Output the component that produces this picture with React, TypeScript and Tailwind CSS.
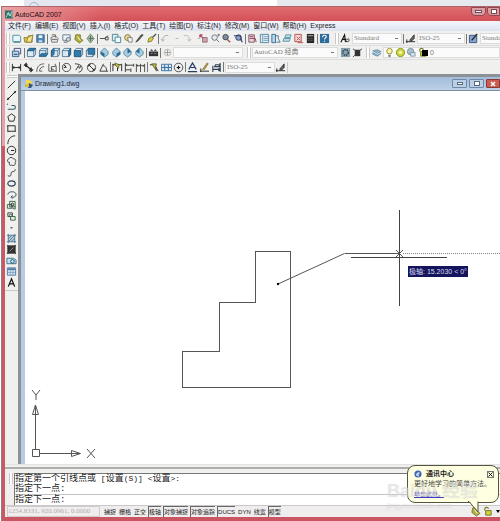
import React from 'react';

const ICONS: Record<string, React.ReactNode> = {
  new: (
    <>
      <path d="M2 2.500h7l1.500 1.500v5.500H2z" fill="#e6f6fa" stroke="#4e8f9e" />
      <path d="M3 10h7" stroke="#2b6d80" />
    </>
  ),
  open: (
    <>
      <path d="M1 5h4l1-2h4v7H2z" fill="#e5c34b" stroke="#7a6a20" strokeWidth=".8" />
      <path d="M5 5l6-3-2 8H4z" fill="#f7e48a" stroke="#6d6727" strokeWidth=".7" />
    </>
  ),
  save: (
    <>
      <rect x="2" y="2" width="8" height="8" fill="#4c86b4" stroke="#2d5f8c" />
      <path d="M4 2.500h4v3H4z" fill="#eef6fb" />
      <path d="M4 8h4v2H4z" fill="#cfe3f0" />
    </>
  ),
  plot: (
    <>
      <path d="M2 5l5-2 3 3-1 4H3z" fill="#e6e6e6" stroke="#555" strokeWidth=".8" />
      <path d="M3 2h4v3M3 7h6" stroke="#666" />
    </>
  ),
  preview: (
    <>
      <path d="M2 2h8v6H2z" fill="#edf4f8" stroke="#5a7d92" />
      <circle cx="8" cy="7" r="2.200" fill="#c8dde8" stroke="#555" strokeWidth=".8" />
      <path d="M3 10h4" stroke="#555" />
    </>
  ),
  publish: (
    <>
      <path d="M3 2h5v4l3 2-4 3-5-4z" fill="#b6b23a" stroke="#5f6420" strokeWidth=".8" />
      <path d="M5 4l3 4" stroke="#fff" />
    </>
  ),
  globe: (
    <>
      <path d="M6 1l4 5-4 5-4-5z" fill="#a9bb9c" stroke="#5f7d6a" strokeWidth=".8" />
      <path d="M4 6h5M6 3v6" stroke="#4d6b6c" />
    </>
  ),
  cut: <path d="M1 6h6M7 4.500h3v3H7zM6 6l4-3" stroke="#4a4a4a" />,
  copy: (
    <>
      <path d="M1.500 1.500h6v7h-6z" fill="#ddf0f5" stroke="#4b8494" />
      <path d="M4.500 4.500h6v6h-6z" fill="#f3fafc" stroke="#4b8494" />
    </>
  ),
  paste: (
    <>
      <circle cx="5" cy="5" r="3.200" fill="#ecd98c" stroke="#77713f" />
      <path d="M5 5h5v5H6z" fill="#f5f5f5" stroke="#666" strokeWidth=".8" />
    </>
  ),
  match: <path d="M2 10l3-2 5-6-2 0-4 5z" fill="#5d5a4d" stroke="#333" strokeWidth=".8" />,
  brush: (
    <>
      <path d="M2 10l1-4 3-2 2 2-2 3z" fill="#dccb3f" stroke="#6c6622" strokeWidth=".8" />
      <path d="M7 5l4-4" stroke="#555" strokeWidth="1.500" />
    </>
  ),
  undo: <path d="M9 3C5 2 3 4 3 8M1 6.500L3 9l2-2" stroke="#aaa" />,
  redo: <path d="M2 3c5-1 6 1 6 5M6 7l2 2 2-2.500" stroke="#b5b5b5" />,
  dash: <path d="M5 6h3" stroke="#b5b5b5" />,
  pan: (
    <>
      <path d="M2 2l4 4M2 2h3M2 2v3" stroke="#b44660" strokeWidth="1.300" />
      <path d="M5 5h5v5H5z" fill="#d3a5a9" stroke="#815361" strokeWidth=".8" />
    </>
  ),
  zoom: (
    <>
      <circle cx="5" cy="5" r="3" fill="#e5ebf1" stroke="#6f747d" />
      <path d="M7 7l3 3M8 2h3M9.500 1v3" stroke="#6f747d" />
    </>
  ),
  zoomWin: (
    <>
      <circle cx="5" cy="4.500" r="3" fill="#7d8c9e" stroke="#3d4956" />
      <path d="M7 7l3 3" stroke="#a04c50" strokeWidth="1.500" />
    </>
  ),
  zoomPrev: (
    <>
      <circle cx="6" cy="5" r="3" fill="#8fa1c8" stroke="#2d3a66" />
      <path d="M1 3h7l2 7M8 7l2 3" stroke="#2d3a66" />
    </>
  ),
  props: (
    <>
      <path d="M2 2h6v8H2z" fill="#e6d6dc" stroke="#804e60" />
      <path d="M3 4h4M3 6h6l1 4" stroke="#9b3b55" />
    </>
  ),
  palette: (
    <>
      <path d="M1.500 1.500h9v9h-9z" fill="#e4f0f8" stroke="#4f83a5" />
      <path d="M4 2v8M5 4h5M5 6h5M5 8h5" stroke="#5a86a5" strokeWidth=".8" />
    </>
  ),
  tools: (
    <>
      <path d="M2 1.500h4v9H2z" fill="#b8d7ea" stroke="#356c91" />
      <path d="M6 3h3v3l2 4H7" stroke="#4a7794" />
    </>
  ),
  sheets: <path d="M4 2h6l-1 3H3zM2 6h7l-1 3H1z" fill="#bfe0ea" stroke="#3e7f93" strokeWidth=".8" />,
  markup: (
    <>
      <path d="M2 1.500h7v8H2z" fill="#f6dede" stroke="#b34b4b" />
      <path d="M4 4l4 4M8 4L4 8M5 10.500h6" stroke="#c04747" />
    </>
  ),
  calc: (
    <>
      <path d="M2 1h8v10H2z" fill="#2a2a2a" />
      <path d="M3 3h6" stroke="#b5c4b5" />
      <path d="M3 6h6M3 8h6" stroke="#777" strokeDasharray="1 1" />
    </>
  ),
  help: (
    <>
      <rect x="1" y="1" width="10" height="10" fill="#2d6d9c" />
      <path d="M4 4.500c0-3 4-2.500 4-.3C8 5.500 6 5.500 6 7M6 8.500v1" stroke="#fff" strokeWidth="1.200" />
    </>
  ),
  textStyle: (
    <>
      <path d="M1 10l4-8 1 8M3 7h4" stroke="#111" strokeWidth="1.200" />
      <path d="M6 9c4 2 5-2 3-3L7 8" stroke="#333" />
    </>
  ),
  dimStyle: (
    <>
      <path d="M1 9.500h10M2 7v4" stroke="#222" />
      <path d="M5 8l5-6v4l-3 3z" fill="#666" stroke="#222" strokeWidth=".8" />
    </>
  ),
  tableStyle: (
    <>
      <path d="M1.500 2.500h8v8h-8z" fill="#86a6cf" stroke="#39517d" />
      <path d="M4 8l6-7" stroke="#222" strokeWidth="1.500" />
    </>
  ),
  views: (
    <>
      <path d="M3.500 1.500h7v6h-7z" fill="#eef" stroke="#447" />
      <path d="M1.500 4.500h7v6h-7z" fill="#bcd6e8" stroke="#2c6088" />
      <path d="M3 8h4" stroke="#235" />
    </>
  ),
  camera: (
    <>
      <path d="M1 5h10v5H1z" fill="#333" />
      <path d="M2 5l2-3 2 3 2-3 2 3z" fill="#667" />
      <path d="M3 7h2M7 7h2" stroke="#8a93a0" />
    </>
  ),
  ucs: (
    <>
      <circle cx="6" cy="6" r="3.500" stroke="#b5b5b5" />
      <path d="M6 3v6M3 6h6" stroke="#999" />
    </>
  ),
  gear: (
    <>
      <rect x="1" y="1" width="10" height="10" fill="#87a0ad" />
      <circle cx="6" cy="6" r="3" stroke="#263c4a" strokeWidth="1.500" strokeDasharray="1.500 1" />
    </>
  ),
  myspace: (
    <>
      <path d="M3 3h6v7H3z" fill="#333" />
      <path d="M1 2l3 2M8 4l3-2M3 9l-2 2" stroke="#444" />
    </>
  ),
  layers: <path d="M2 4l5-1 4 2-4 2zM2 6l5 3 4-2-4 3-5-2z" fill="#8eb3cc" stroke="#5e8aa8" strokeWidth=".8" />,
  bulb: (
    <>
      <circle cx="6" cy="4.500" r="3" fill="#fbf6a0" stroke="#8d8a35" />
      <path d="M4.500 9h3M5 10.500h2" stroke="#555" />
    </>
  ),
  sun: (
    <>
      <circle cx="6" cy="6" r="4.500" fill="#c9d33d" stroke="#8a9421" />
      <circle cx="6" cy="6" r="2" fill="#f8f59c" />
    </>
  ),
  viewport: (
    <>
      <circle cx="5" cy="5" r="3.500" fill="#a9c3cf" stroke="#6f8c99" />
      <path d="M5 6h5v4H5z" fill="#d6e4ea" stroke="#6f8c99" strokeWidth=".8" />
    </>
  ),
  lock: (
    <>
      <path d="M3 5V3c0-2 4-2 4 0" stroke="#777b24" strokeWidth="1.200" />
      <path d="M4 5h6v5H4z" fill="#d4d13b" stroke="#6f7322" />
    </>
  ),
  dimLinear: <path d="M1.500 2v8M10.500 2v8M2 6h8M3.500 4.500L2 6l1.500 1.500M8.500 4.500L10 6 8.500 7.500" stroke="#222" />,
  dimAligned: <path d="M1 4l3-3M8 11l3-3M2.500 3l7 6M3 5.500V3h2M9 6v3H6.500" stroke="#222" strokeWidth="1.200" />,
  dimArc: <path d="M2 10C2 5 5 2 10 2M5 10c0-3 2-5 5-5M5 10h3M2 10v1" stroke="#555" />,
  dimOrd: <path d="M2 2v8h8M5 10V5h4V2M4 7l4 2M10 4v7" stroke="#444" strokeWidth=".9" />,
  dimRad: (
    <>
      <circle cx="6" cy="6" r="4.500" stroke="#444" />
      <path d="M3 3l3 3M5 4v2H3" stroke="#222" />
    </>
  ),
  dimJog: <path d="M2 2c5 0 8 2 8 5s-2 4-4 4M3 9l3-5 1 3 2-3" stroke="#333" />,
  dimDia: (
    <>
      <circle cx="6" cy="6" r="4.500" stroke="#444" />
      <path d="M3 3l6 6M3 5V3h2M9 7v2H7" stroke="#222" />
    </>
  ),
  dimAng: <path d="M6 2L2 10h9M5 4c3 0 5 3 4 6" stroke="#333" />,
  dimQuick: (
    <>
      <path d="M1 2v8M6 4v6M10.500 2v8M1 3h9" stroke="#222" />
      <path d="M3 1l5 2-1 4-3-3z" fill="#c2bc39" stroke="#4d5220" strokeWidth=".7" />
    </>
  ),
  dimBase: <path d="M1.500 1v10M10.500 2v3M7.500 7v4M2 3.500h8M2 8.500h5M3 2.500L2 3.500l1 1" stroke="#333" />,
  dimCont: <path d="M1.500 2v9M6 2v9M10.500 2v9M2 4h8M3 3L2 4l1 1M9 3l1 1-1 1" stroke="#333" strokeWidth=".9" />,
  leader: (
    <>
      <path d="M1 3h5l4 7M7 5l1 5" stroke="#222" />
      <path d="M3 2l5 0-1 6z" fill="#b7b13b" stroke="#555b20" strokeWidth=".8" />
    </>
  ),
  tolerance: (
    <>
      <path d="M.5 2.500h11v7H.5z" fill="#dceaf6" stroke="#3a6c9c" />
      <path d="M4 3v6M8 3v6M1 6h10" stroke="#3a6c9c" strokeWidth="1.200" />
    </>
  ),
  center: (
    <>
      <circle cx="6" cy="6" r="4.700" stroke="#444" />
      <path d="M6 4v4M4 6h4" stroke="#111" strokeWidth="1.300" />
    </>
  ),
  dimEdit: <path d="M2 8l4-7 4 7M4 6h4M1 10.500h10" stroke="#1f3d66" strokeWidth="1.300" />,
  dimTextEdit: (
    <>
      <path d="M1 10h10M2 7v4" stroke="#222" />
      <path d="M4 8l5-7 1 1-4 6z" fill="#d5b93c" stroke="#5a4a1b" strokeWidth=".7" />
    </>
  ),
  dimUpdate: <path d="M2 4v7M10 1v10M2 8h8M4 5h5V3H5zM8 7l2 1-2 1.500" stroke="#2c3f55" strokeWidth="1.200" />,
  line: <path d="M2 10l8-8" stroke="#222" />,
  xline: (
    <>
      <path d="M1 11L11 1" stroke="#111" />
      <path d="M3 9l-1 1M9 3l1-1" stroke="#111" strokeWidth="2" />
    </>
  ),
  pline: <path d="M1 4l1-1M2 9h6c3 0 3-4 0-4H6" stroke="#2c5360" strokeWidth="1.100" />,
  polygon: <path d="M6 2l4 3-1.500 5h-5L2 5z" stroke="#222" />,
  rect: <path d="M2 3h8v6H2zM1 3h1M10 9h1M2 9v1" stroke="#222" />,
  arc: <path d="M2 11C2 6 5 2 10 2" stroke="#222" />,
  circle: (
    <>
      <circle cx="6" cy="6" r="4.600" stroke="#222" />
      <path d="M6 6h3M5.500 6h1" stroke="#222" strokeWidth="1.300" />
    </>
  ),
  cloud: <path d="M3 3c1-2 4-2 5 0 3 0 3 3 2 4 1 3-2 4-4 3-2 1-3-1-2-3-3 0-3-3-1-4z" stroke="#333" />,
  spline: <path d="M2 9.500c2 1 3.500.5 3.500-1.500S6 5 7.500 5 10 4.500 10 2.500" stroke="#333" />,
  ellipse: <ellipse cx="6" cy="6" rx="4" ry="2.800" stroke="#2a3d55" strokeWidth="1.300" />,
  ellipseArc: <path d="M2 6c0-4 9-4 9 0 0 3-3 3-5 3M7 7L5.500 9 7 10.500" stroke="#2a4a55" />,
  insert: (
    <>
      <path d="M4 1.500h6v6H4z" fill="#dfeee0" stroke="#37603f" />
      <path d="M1.500 5h5v4h-5zM7 9l3 1V7" stroke="#37603f" />
      <circle cx="7" cy="5" r="1.500" stroke="#222" />
    </>
  ),
  block: (
    <>
      <path d="M2 2h5v4H2z" stroke="#37503f" />
      <circle cx="5" cy="5" r="1.500" stroke="#37503f" />
      <path d="M5 6h5v4H5z" fill="#dfeee0" stroke="#37603f" />
    </>
  ),
  point: <path d="M5 5.500h2v1.500H5z" fill="#444" />,
  hatch: (
    <>
      <path d="M2 2h8v8H2z" fill="#b9cfdc" />
      <path d="M1 2.500h10M1 9.500h10M2.500 1v10M9.500 1v10M3 9l6-6M3 6l3-3M6 9l3-3" stroke="#4a7088" strokeWidth=".9" />
    </>
  ),
  gradient: (
    <>
      <path d="M2 2h8v8H2z" fill="#333" />
      <path d="M1 2h10M1 10h10M2 1v10M10 1v10" stroke="#333" />
      <path d="M4 8l4-4" stroke="#999" />
    </>
  ),
  region: (
    <>
      <path d="M1 3.500h7l3 2v4H1z" fill="#bfe3ee" stroke="#3d7188" />
      <circle cx="7" cy="7" r="2" stroke="#2c5268" />
    </>
  ),
  table: (
    <>
      <path d="M1.500 2h9v8h-9z" fill="#dcebf7" stroke="#4b78a0" />
      <path d="M2 3.500h8" stroke="#4b78a0" strokeWidth="2" />
      <path d="M2 7h8M4.500 4v6M7.500 4v6" stroke="#6e95b8" strokeWidth=".8" />
    </>
  ),
  mtext: <path d="M2.500 10.500L6 2l3.500 8.500M4 7.500h4" stroke="#111" strokeWidth="1.400" />,
};

// View cubes share one outline, only the highlighted face moves.
const CUBE_FACES: Record<string, string> = {
  cubeTop: 'M1.500 4l2-2.500h7L8.500 4z',
  cubeBottom: 'M1.500 10l2-3h7l-2 3z',
  cubeLeft: 'M1.500 4l3-2.500v6.500l-3 2.500z',
  cubeRight: 'M8.500 4l2-2.500V8l-2 2.500z',
  cubeFront: 'M1.500 4h7v6.500h-7z',
  cubeBack: 'M3.500 1.500h7V8h-7z',
};

Object.entries(CUBE_FACES).forEach(([name, face]) => {
  ICONS[name] = (
    <>
      <path d="M1.500 4l2-2.500h7V8l-2 2.500h-7zM1.500 4h7v6.500M8.500 4l2-2.500" fill="#dbe9f2" stroke="#2d5c80" strokeWidth=".8" />
      <path d={face} fill="#2f7cae" stroke="#1e567d" strokeWidth=".8" />
    </>
  );
});

const ISO_FACES: Record<string, string> = {
  isoSW: 'M2 5l4 2v4L2 8z',
  isoSE: 'M10 5L6 7v4l4-3z',
  isoNE: 'M6 1l4 4-4 2z',
  isoNW: 'M6 1v6L2 5z',
};

Object.entries(ISO_FACES).forEach(([name, face]) => {
  ICONS[name] = (
    <>
      <path d="M6 1l4 4v3l-4 3-4-3V5z" fill="#a9cde0" stroke="#3f7897" strokeWidth=".8" />
      <path d={face} fill="#2a6a94" />
    </>
  );
});

const Icon = ({ name }: { name: string }) => (
  <svg viewBox="0 0 12 12" fill="none" className="h-[11px] w-[11px] shrink-0" aria-hidden="true">
    {ICONS[name]}
  </svg>
);

const Tools = ({ names, className }: { names: string[]; className: string }) => (
  <div className={`flex shrink-0 justify-between ${className}`}>
    {names.map((name, i) => (
      <button key={name + i} type="button" aria-label={name} className="block">
        <Icon name={name} />
      </button>
    ))}
  </div>
);

const Sep = () => <div className="mx-px h-[10px] w-px shrink-0 bg-[#777]" />;

const Grip = () => <div className="mr-px h-[11px] w-[4px] shrink-0 border-x border-[#c9c9c9] bg-white" />;

const Combo = ({ label, value, className }: { label: string; value: string; className: string }) => (
  <div className={`relative h-[11px] shrink-0 border border-[#dcdcdc] bg-[#fbfbfb] ${className}`}>
    <select
      aria-label={label}
      defaultValue={value}
      className="block h-full w-full appearance-none bg-transparent pl-px font-['Liberation_Serif','Noto_Sans_CJK_SC',serif] text-[7px] leading-[9px] text-[#777]"
    >
      <option>{value}</option>
    </select>
    <span className="pointer-events-none absolute top-[4px] right-[3px] h-px w-[3px] bg-[#777]" />
  </div>
);

const MENUS = [
  '文件(F)', '编辑(E)', '视图(V)', '插入(I)', '格式(O)', '工具(T)',
  '绘图(D)', '标注(N)', '修改(M)', '窗口(W)', '帮助(H)', 'Express',
];

const DRAW_TOOLS = [
  'line', 'xline', 'pline', 'polygon', 'rect', 'arc', 'circle', 'cloud', 'spline', 'ellipse',
  'ellipseArc', 'insert', 'block', 'point', 'hatch', 'gradient', 'region', 'table', 'mtext',
];

const MODES = [
  { label: '捕捉', on: false },
  { label: '栅格', on: false },
  { label: '正交', on: false },
  { label: '极轴', on: true },
  { label: '对象捕捉', on: true },
  { label: '对象追踪', on: true },
  { label: 'DUCS', on: true },
  { label: 'DYN', on: false },
  { label: '线宽', on: false },
  { label: '模型', on: true },
];

const Desktop = () => (
  <div className="flex h-[6px] shrink-0 overflow-hidden bg-white">
    <div className="ml-[24px] w-[136px] bg-[#e5e7f0] pl-[5px]">
      <div className="mt-[2px] h-[10px] w-[10px] rounded-full border border-[#9db8d6]" />
    </div>
    <div className="ml-[117px] flex-1 bg-[#e6e9ee]" />
  </div>
);

const TitleBar = () => (
  <header className="flex h-[15px] shrink-0 items-center border-t border-[#b0646a] bg-gradient-to-b from-[#e06c71] to-[#d35057]">
    <div className="flex h-full w-[100px] items-center bg-gradient-to-r from-[#e9a3a5] to-transparent pl-[3px]">
      <svg viewBox="0 0 9 9" className="h-[9px] w-[8px]" fill="none">
        <path d="M0 0h9v9H0z" fill="#2f6f6b" />
        <path d="M1 8l3-6 1 4 3-5v7M2 3l5 3" stroke="#b8dcd3" />
      </svg>
      <h1 className="ml-[2px] text-[7px] leading-[9px] whitespace-nowrap text-[#26090b]">AutoCAD 2007</h1>
    </div>
    <div className="ml-auto flex h-full items-start gap-px">
      <button type="button" aria-label="最小化" className="flex h-[9px] w-[15px] items-center justify-center rounded-b-sm border border-[#8e4650] bg-[#dd9da2]">
        <span className="h-[3px] w-[7px] border border-[#6c4b52] bg-white" />
      </button>
      <button type="button" aria-label="还原" className="flex h-[9px] w-[13px] items-center justify-center rounded-bl-sm border border-[#8e4650] bg-[#dd9da2]">
        <span className="h-[5px] w-[6px] border border-[#6c4b52] bg-white" />
      </button>
    </div>
  </header>
);

const Toolbars = () => (
  <div className="shrink-0 bg-[#f0f0ef] pt-px pl-px">
    <div className="flex h-[14px] items-center overflow-hidden border-b border-[#dedede]">
      <Grip />
      <Tools className="w-[35px]" names={['new', 'open', 'save']} />
      <Sep />
      <Tools className="w-[47px]" names={['plot', 'preview', 'publish', 'globe']} />
      <Sep />
      <Tools className="w-[58px]" names={['cut', 'copy', 'paste', 'match', 'brush']} />
      <Sep />
      <Tools className="w-[38px]" names={['undo', 'dash', 'redo', 'dash']} />
      <Tools className="w-[46px]" names={['pan', 'zoom', 'zoomWin', 'zoomPrev']} />
      <Sep />
      <Tools className="w-[69px]" names={['props', 'palette', 'tools', 'sheets', 'markup', 'calc']} />
      <Sep />
      <Tools className="w-[16px]" names={['help']} />
      <Grip />
      <Tools className="w-[12px]" names={['textStyle']} />
      <Combo label="文字样式" value="Standard" className="w-[50px]" />
      <Sep />
      <Tools className="w-[12px]" names={['dimStyle']} />
      <Combo label="标注样式" value="ISO-25" className="w-[48px]" />
      <Sep />
      <Tools className="w-[12px]" names={['tableStyle']} />
      <Combo label="表格样式" value="Standard" className="w-[50px]" />
    </div>
    <div className="flex h-[14px] items-center overflow-hidden border-b border-[#dedede]">
      <Grip />
      <Tools className="w-[12px]" names={['views']} />
      <Sep />
      <Tools className="w-[70px]" names={['cubeTop', 'cubeBottom', 'cubeLeft', 'cubeRight', 'cubeFront', 'cubeBack']} />
      <Sep />
      <Tools className="w-[46px]" names={['isoSW', 'isoSE', 'isoNE', 'isoNW']} />
      <Sep />
      <Tools className="w-[11px]" names={['camera']} />
      <Sep />
      <Tools className="w-[11px]" names={['ucs']} />
      <Combo label="UCS" value="" className="w-[70px]" />
      <div className="w-[4px] shrink-0" />
      <Grip />
      <Combo label="工作空间" value="AutoCAD 经典" className="w-[86px]" />
      <Tools className="ml-[2px] w-[23px]" names={['gear', 'myspace']} />
      <div className="w-[3px] shrink-0" />
      <Grip />
      <Tools className="w-[12px]" names={['layers']} />
      <div className="flex h-[11px] min-w-0 flex-1 items-center border border-[#dcdcdc] bg-[#fbfbfb]">
        <Tools className="w-[38px]" names={['bulb', 'sun', 'viewport', 'lock']} />
        <span className="h-[6px] w-[6px] shrink-0 bg-black" />
        <span className="ml-[2px] text-[7px] leading-[9px] text-[#777]">0</span>
      </div>
    </div>
    <div className="flex h-[14px] items-center overflow-hidden">
      <Grip />
      <Tools className="w-[47px]" names={['dimLinear', 'dimAligned', 'dimArc', 'dimOrd']} />
      <Sep />
      <Tools className="w-[48px]" names={['dimRad', 'dimJog', 'dimDia', 'dimAng']} />
      <Sep />
      <Tools className="w-[34px]" names={['dimQuick', 'dimBase', 'dimCont']} />
      <Sep />
      <Tools className="w-[35px]" names={['leader', 'tolerance', 'center']} />
      <Sep />
      <Tools className="w-[35px]" names={['dimEdit', 'dimTextEdit', 'dimUpdate']} />
      <Sep />
      <Combo label="标注样式控制" value="ISO-25" className="w-[50px]" />
      <Tools className="w-[13px] border-r border-[#c9c9c9]" names={['dimStyle']} />
    </div>
  </div>
);

const Canvas = () => (
  <div className="relative min-h-[320px] flex-1 overflow-hidden bg-white">
    <svg className="absolute inset-0 h-full w-full" fill="none" stroke="#555" shapeRendering="crispEdges">
      <path d="M157.500 296.500V260.500H194.500V211.500H230.500V160.500H265.500V296.500Z" />
      <path d="M319.500 162.500H375" />
      <path d="M374.500 119V215M326 166.500H422" stroke="#444" />
      <path d="M378 162.500H2000" stroke="#888" strokeDasharray="1 1" />
      <g shapeRendering="auto">
        <path d="M253 193L319.500 162.500" />
        <path d="M371 159l7 7M378 159l-7 7" />
        <circle cx="253" cy="193" r="1.200" fill="#000" stroke="none" />
      </g>
    </svg>
    <div className="absolute top-[175px] left-[383px] h-[11px] bg-[#14145c] px-px text-[7px] leading-[11px] whitespace-nowrap text-[#dcdcf4]">
      极轴: 15.2030 &lt; 0°
    </div>
    <svg viewBox="0 0 72 78" className="absolute bottom-0 left-[5px] h-[78px] w-[72px]" fill="none" stroke="#555">
      <path d="M2.500 63.500h7v7h-7zM5.500 63V19M10 67.500h40M2.500 28.500L5.500 19l3 9.500zM41.500 64.500v6l9-3z" />
      <path d="M2 4l4 5 4-5M6 9v5M57 63l8 9M65 63l-8 9" />
    </svg>
  </div>
);

const ChildWindow = () => (
  <section className="flex min-w-0 flex-1 flex-col border-t-[3px] border-l-[3px] border-[#8b9196] bg-[#b7cbe3]">
    <div className="flex h-[14px] shrink-0 items-center border-b border-[#7f8fa3] bg-gradient-to-b from-[#a3bcda] to-[#bdd1e8] pl-[4px]">
      <svg viewBox="0 0 8 8" className="h-[8px] w-[8px]">
        <path d="M1 0h4l2 2v5H1z" fill="#f1d654" />
        <path d="M4 3l4 2-2 3H3z" fill="#34588c" />
        <path d="M0 4l4 1v2H0z" fill="#d9b92e" />
      </svg>
      <h2 className="ml-[2px] text-[7px] leading-[9px] text-[#1c2733]">Drawing1.dwg</h2>
      <div className="ml-auto flex gap-[2px]">
        <button type="button" aria-label="最小化" className="flex h-[9px] w-[15px] items-center justify-center rounded-[1px] border border-[#6f88a5] bg-[#bccfe4]">
          <span className="h-[3px] w-[6px] border border-[#596b80] bg-white" />
        </button>
        <button type="button" aria-label="最大化" className="flex h-[9px] w-[15px] items-center justify-center rounded-[1px] border border-[#6f88a5] bg-[#bccfe4]">
          <span className="h-[5px] w-[6px] border border-[#596b80] bg-white" />
        </button>
        <button type="button" aria-label="关闭" className="flex h-[9px] w-[14px] items-center justify-center rounded-l-[1px] border border-[#8c3a35] bg-[#cb5a50]">
          <svg viewBox="0 0 6 6" className="h-[6px] w-[6px]">
            <path d="M1 1l4 4M5 1L1 5" stroke="#fff" strokeWidth="1.500" />
          </svg>
        </button>
      </div>
    </div>
    <div className="flex flex-1 flex-col pl-[4px]">
      <Canvas />
    </div>
  </section>
);

const CommandLine = () => (
  <div className="shrink-0 border-t border-[#e2e2e2] bg-[#f0f0ef] pt-[2px]">
    <div className="h-[2px] bg-[#adadad]" />
    <div className="mt-[4px] flex pl-[4px]">
      <Grip />
      <div className="min-w-0 flex-1 border-t border-l border-[#777] bg-white font-['Liberation_Mono','Noto_Sans_CJK_SC',monospace] text-[9px] leading-[10px] text-[#222]">
        <p className="whitespace-nowrap">
          指定第一个引线点或<span className="text-[8px]"> [</span>设置<span className="text-[8px]">(S)] &lt;</span>设置
          <span className="text-[8px]">&gt;:</span>
        </p>
        <p>指定下一点:</p>
        <div className="flex border-t border-[#c4c4c4]">
          <label htmlFor="command">指定下一点:</label>
          <input id="command" className="h-[10px] min-w-0 flex-1 outline-none" />
        </div>
      </div>
    </div>
  </div>
);

const StatusBar = () => (
  <footer className="flex h-[12px] shrink-0 items-center gap-[2px] border-t border-[#c9c9c9] bg-[#efeded] pl-[2px] text-[6px] leading-[9px] whitespace-nowrap text-[#222]">
    <div className="mr-px h-[11px] w-[93px] border border-[#d0cccc] font-['Liberation_Serif',serif] text-[7px] text-[#b3abab]">
      1254.8331, 920.0961, 0.0000
    </div>
    {MODES.map(({ label, on }) => (
      <button
        key={label}
        type="button"
        aria-pressed={on}
        className={`h-[11px] border-t border-l ${on ? 'border-[#666]' : 'border-transparent'}`}
      >
        {label}
      </button>
    ))}
    <div className="ml-auto flex items-center gap-px">
      <Icon name="publish" />
      <Icon name="lock" />
      <span className="ml-[2px] border-x-2 border-t-[3px] border-x-transparent border-t-black" />
    </div>
  </footer>
);

const Balloon = () => (
  <aside className="absolute right-px bottom-[18px] h-[38px] w-[92px] rounded-lg border border-[#55553f] bg-[#ffffe1] px-[6px] pt-[3px]">
    <div className="flex items-center">
      <svg viewBox="0 0 9 9" className="h-[8px] w-[8px]">
        <circle cx="4.500" cy="4.500" r="4" fill="#3d63b5" />
        <path d="M2 6c1-4 3-4 5-3L5 5l1 3z" fill="#c9dbf5" />
      </svg>
      <strong className="ml-[4px] text-[7px] leading-[10px] text-[#222]">通讯中心</strong>
      <button type="button" aria-label="关闭" className="-mr-[2px] ml-auto flex h-[7px] w-[7px] items-center justify-center border border-[#777]">
        <svg viewBox="0 0 5 5" className="h-[5px] w-[5px]">
          <path d="M.5.5l4 4M4.500.5l-4 4" stroke="#111" />
        </svg>
      </button>
    </div>
    <p className="text-[7px] leading-[10px] whitespace-nowrap text-[#444]">更好地学习的简单方法。</p>
    <a href="#info" className="block w-fit text-[6px] leading-[10px] whitespace-nowrap text-[#3a3ac0] underline">
      单击此处。
    </a>
    <svg viewBox="0 0 14 12" className="absolute -bottom-[11px] left-[60px] h-[12px] w-[14px]">
      <path d="M1 0L10 10.500V0z" fill="#ffffe1" />
      <path d="M0 .5h1L10 11V.5" fill="none" stroke="#55553f" />
    </svg>
  </aside>
);

const Watermark = () => (
  <div className="pointer-events-none absolute right-[22px] bottom-[11px] text-white/30">
    <div className="text-[18px] leading-[20px] font-bold whitespace-nowrap [text-shadow:0_0_1px_#bbb8]">Baidu 经验</div>
    <div className="text-[8px] leading-[9px] [text-shadow:0_0_1px_#bbb8]">jingyan.baidu.com</div>
  </div>
);

const App = () => (
  <div
    lang="zh-CN"
    className="relative flex min-h-screen flex-col overflow-hidden bg-white font-['Liberation_Sans','Noto_Sans_CJK_SC',sans-serif]"
  >
    <Desktop />
    <div className="ml-px flex flex-1 flex-col border-l border-[#8d8084]">
      <TitleBar />
      <div className="flex flex-1 flex-col bg-[linear-gradient(#e9a0aa_0_125px,#cf5663_125px)] pl-[3px]">
        <nav className="flex h-[10px] shrink-0 items-center gap-[4px] bg-gradient-to-b from-[#f4f6fb] to-[#dde3f0] pl-[3px] text-[7px] leading-[10px] whitespace-nowrap text-[#222]">
          {MENUS.map((menu) => (
            <button key={menu} type="button">
              {menu}
            </button>
          ))}
        </nav>
        <Toolbars />
        <div className="flex flex-1">
          <div className="flex w-[13px] shrink-0 flex-col items-center bg-[#f0f0ef] pt-px">
            <div className="mb-px h-[3px] w-[10px] border-y border-[#c9c9c9] bg-white" />
            {DRAW_TOOLS.map((name) => (
              <button key={name} type="button" aria-label={name} className="block">
                <Icon name={name} />
              </button>
            ))}
            <div className="mt-[2px] h-px w-full bg-[#c9c9c9]" />
          </div>
          <ChildWindow />
        </div>
        <CommandLine />
        <StatusBar />
      </div>
      <div className="h-[4px] shrink-0 bg-[#cb5560]" />
    </div>
    <Balloon />
    <Watermark />
  </div>
);

export default App;
